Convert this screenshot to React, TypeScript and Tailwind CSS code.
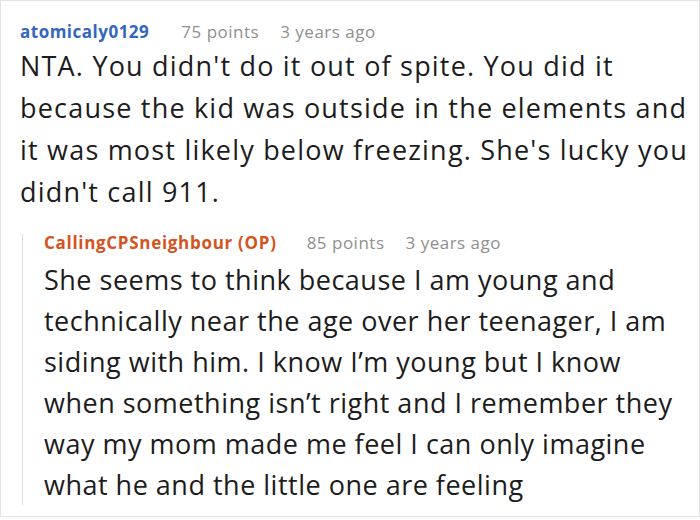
export default function App() {
  return (
    <div className="h-[517px] w-[700px] overflow-hidden border border-[#e4e4e4] bg-white font-['Open_Sans',sans-serif]">
      <div className="pl-[19px] pr-[4px] pt-[19px]">
        <div className="flex items-baseline text-[17px] leading-6 tracking-[0.5px]">
          <span className="font-bold text-[#3467bd]">atomicaly0129</span>
          <span className="ml-[32px] text-[#8f8f8f]">75 points</span>
          <span className="ml-[21px] text-[#8f8f8f]">3 years ago</span>
        </div>
        <p className="mt-[1px] text-[27px] leading-[42px] tracking-[1.2px] text-[#1c1c1c]">
          NTA. You didn't do it out of spite. You did it because the kid was outside in the
          elements and it was most likely below freezing. She's lucky you didn't call 911.
        </p>
        <div className="mt-[21px] ml-[2px] border-l border-[#dcdcdc] pl-[21px]">
          <div className="flex items-baseline text-[17px] leading-[18px] tracking-[0.5px]">
            <span className="font-bold tracking-[0.7px] text-[#d4541e]">
              CallingCPSneighbour (OP)
            </span>
            <span className="ml-[30px] text-[#8f8f8f]">85 points</span>
            <span className="ml-[21px] text-[#8f8f8f]">3 years ago</span>
          </div>
          <p className="mt-[7px] text-[27px] leading-[41px] tracking-[0.5px] text-[#1c1c1c]">
            She seems to think because I am young and technically near the age over her
            teenager, I am siding with him. I know I’m young but I know when something isn’t
            right and I remember they way my mom made me feel I can only imagine what he and
            the little one are feeling
          </p>
        </div>
      </div>
    </div>
  );
}
